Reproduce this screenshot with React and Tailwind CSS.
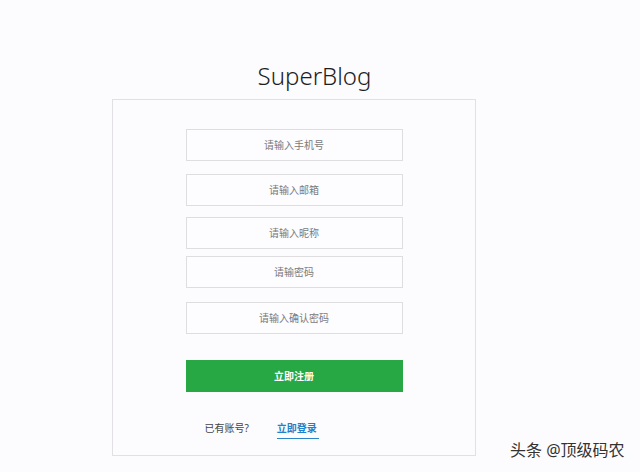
import { useState } from "react";

const fields = [
  { placeholder: "请输入手机号", type: "text", mt: "mt-0" },
  { placeholder: "请输入邮箱", type: "email", mt: "mt-[13px]" },
  { placeholder: "请输入昵称", type: "text", mt: "mt-[11px]" },
  { placeholder: "请输密码", type: "password", mt: "mt-[7px]" },
  { placeholder: "请输入确认密码", type: "password", mt: "mt-[14px]" },
];

function App() {
  const [values, setValues] = useState({});

  return (
    <div
      className="relative min-h-screen bg-[#fcfbfd]"
      style={{ fontFamily: '"Noto Sans", "Noto Sans CJK SC", sans-serif' }}
    >
      <div className="ml-[112px] w-[364px] pt-[59px]">
        <h1 className="pl-[41px] text-center text-[24px] font-light leading-[34px] text-[#1e1e1e]">
          SuperBlog
        </h1>

        <div className="mt-[6px] h-[357px] border border-[#e2e0e4] bg-[#fcfbfd]">
          <div className="mx-auto w-[217px] pt-[29px]">
            {fields.map((field, i) => (
              <input
                key={i}
                type={field.type}
                placeholder={field.placeholder}
                value={values[i] || ""}
                onChange={(e) => setValues({ ...values, [i]: e.target.value })}
                className={`${field.mt} block h-[32px] w-full border border-[#dedde0] bg-[#fdfcfe] text-center text-[10px] text-[#555] outline-none placeholder:text-[#7a7a7a]`}
              />
            ))}

            <button className="mt-[26px] block h-[32px] w-full bg-[#28a745] text-[10px] font-semibold text-white">
              立即注册
            </button>

            <div className="mt-[29px] flex items-start pl-[19px] text-[10px] leading-[14px]">
              <span className="text-[#444]">已有账号?</span>
              <a className="ml-[28px] border-b border-[#2a86c8] pb-[3px] pr-[2px] font-semibold text-[#1f82c9]">
                立即登录
              </a>
            </div>
          </div>
        </div>
      </div>

      <div
        className="absolute left-[510px] top-[439px] text-[16px] leading-[22px] text-[#333]"
        style={{ textShadow: "0 0 2px #fff, 1px 1px 0 #fff" }}
      >
        头条 @顶级码农
      </div>
    </div>
  );
}

export default App;
